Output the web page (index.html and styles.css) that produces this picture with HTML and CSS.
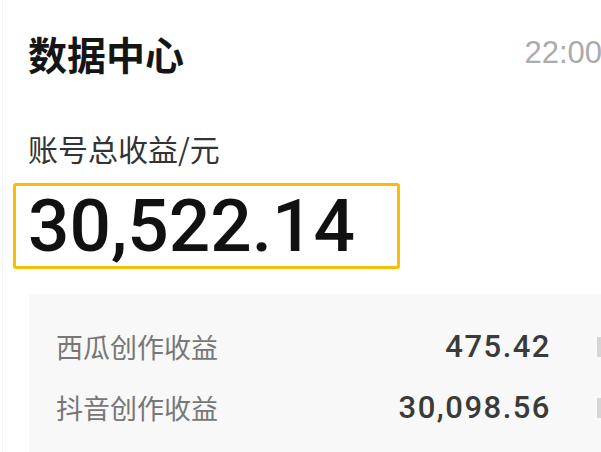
FILE: index.html
```html
<!DOCTYPE html>
<html lang="zh-CN">
<head>
<meta charset="utf-8">
<title>数据中心</title>
<link rel="stylesheet" href="styles.css">
</head>
<body>
<div class="page">
  <header class="header">
    <h1 class="title">数据中心</h1>
    <span class="time">22:00</span>
  </header>
  <div class="subtitle">账号总收益/元</div>
  <div class="total-box">
    <span class="total">30,522.14</span>
  </div>
  <div class="detail">
    <div class="row">
      <span class="label">西瓜创作收益</span>
      <span class="value">475.42</span>
      <span class="mark"></span>
    </div>
    <div class="row">
      <span class="label">抖音创作收益</span>
      <span class="value">30,098.56</span>
      <span class="mark"></span>
    </div>
  </div>
</div>
</body>
</html>
```
FILE: styles.css
```css
html, body {
  margin: 0;
  padding: 0;
  background: #ffffff;
  overflow: hidden;
}
body {
  width: 601px;
  height: 452px;
  font-family: "Noto Sans CJK SC", "Noto Sans", sans-serif;
}
.page {
  margin-left: 2px;
  border-left: 1px solid #f3f3f3;
  padding-left: 25px;
  height: 452px;
  overflow: hidden;
}
.header {
  display: flex;
  align-items: center;
  width: 574px;
  padding-top: 30px;
}
.title {
  margin: 0;
  font-size: 39px;
  line-height: 46px;
  font-weight: 700;
  color: #151515;
}
.time {
  margin-left: auto;
  font-family: "Liberation Sans", Arial, sans-serif;
  font-size: 31px;
  line-height: 46px;
  color: #ababab;
}
.subtitle {
  margin-top: 54px;
  font-size: 30px;
  line-height: 36px;
  color: #333333;
}
.total-box {
  margin-top: 17px;
  margin-left: -15px;
  width: 369px;
  height: 80px;
  border: 3px solid #fcbd00;
  border-radius: 3px;
  display: flex;
  align-items: center;
  padding-left: 12px;
}
.total {
  font-family: Roboto, "Liberation Sans", sans-serif;
  font-size: 73px;
  font-weight: 500;
  line-height: 80px;
  color: #111111;
}
.detail {
  margin-top: 25px;
  margin-left: 1px;
  width: 620px;
  background: #f8f8f8;
  padding: 22px 0 60px 27px;
}
.row {
  display: flex;
  align-items: center;
  height: 61px;
  width: 545px;
}
.label {
  font-size: 27px;
  line-height: 36px;
  color: #777777;
}
.value {
  margin-left: auto;
  font-family: Roboto, "Liberation Sans", sans-serif;
  font-size: 31px;
  font-weight: 500;
  letter-spacing: 1.5px;
  line-height: 36px;
  color: #3a3a3a;
}
.mark {
  margin-left: 46px;
  width: 4px;
  height: 20px;
  background: #d6d6d6;
}
```
